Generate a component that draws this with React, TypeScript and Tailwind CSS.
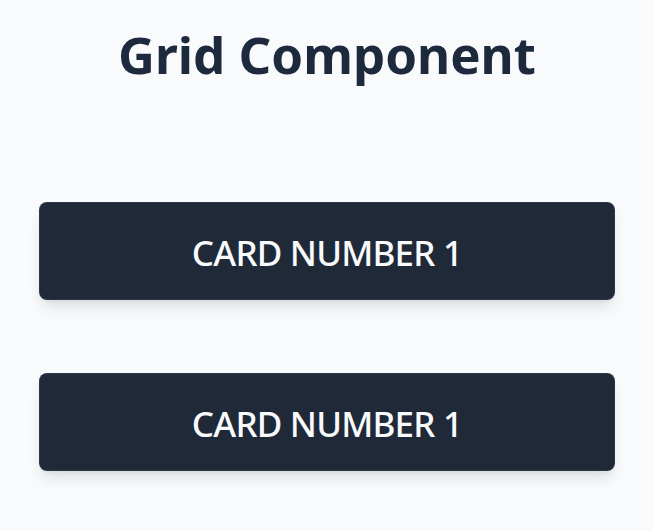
export default function App() {
  const cards = ["CARD NUMBER 1", "CARD NUMBER 1"];
  return (
    <div className="min-h-screen bg-slate-50 pt-[24px] font-['Noto_Sans',sans-serif]">
      <h1 className="text-center text-[51px] font-bold leading-[60px] text-slate-800">Grid Component</h1>
      <div className="mx-auto mt-[118px] flex max-w-xl flex-col gap-[73px]">
        {cards.map((c, i) => (
          <div
            key={i}
            className="flex h-[98px] items-center justify-center rounded-lg border border-gray-700/60 bg-[#1f2937] pt-[4px] shadow-lg"
          >
            <span className="text-[35px] font-medium tracking-[-0.8px] text-slate-50">{c}</span>
          </div>
        ))}
      </div>
    </div>
  );
}
